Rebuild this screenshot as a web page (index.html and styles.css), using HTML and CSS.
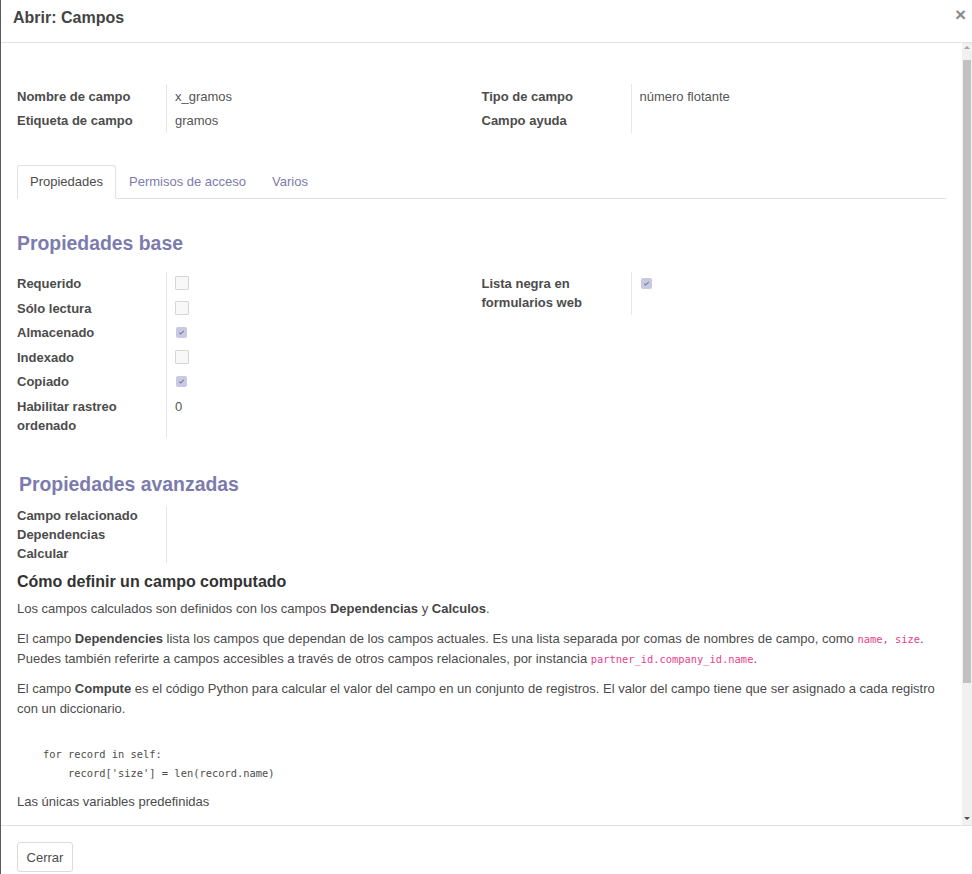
FILE: index.html
```html
<!DOCTYPE html>
<html lang="es">
<head>
<meta charset="utf-8">
<title>Abrir: Campos</title>
<link rel="stylesheet" href="styles.css">
</head>
<body>
<div class="modal">
  <header class="modal-header">
    <h4 class="modal-title">Abrir: Campos</h4>
    <span class="close">×</span>
  </header>
  <div class="modal-body">
    <div class="content">
      <div class="top-groups">
        <div class="group">
          <div class="lbl">Nombre de campo</div><div class="val">x_gramos</div>
          <div class="lbl">Etiqueta de campo</div><div class="val">gramos</div>
        </div>
        <div class="group">
          <div class="lbl">Tipo de campo</div><div class="val">número flotante</div>
          <div class="lbl">Campo ayuda</div><div class="val"></div>
        </div>
      </div>

      <nav class="tabs">
        <span class="tab active">Propiedades</span>
        <span class="tab">Permisos de acceso</span>
        <span class="tab">Varios</span>
      </nav>

      <h3 class="section-title">Propiedades base</h3>
      <div class="top-groups base">
        <div class="group">
          <div class="lbl">Requerido</div><div class="val"><span class="cb"></span></div>
          <div class="lbl">Sólo lectura</div><div class="val"><span class="cb"></span></div>
          <div class="lbl">Almacenado</div><div class="val"><span class="cb checked"><svg viewBox="0 0 11 11" width="11" height="11"><path d="M3.2 5.6 L4.7 7 L7.8 3.9" fill="none" stroke="#7c7bad" stroke-width="1.1"/></svg></span></div>
          <div class="lbl">Indexado</div><div class="val"><span class="cb"></span></div>
          <div class="lbl">Copiado</div><div class="val"><span class="cb checked"><svg viewBox="0 0 11 11" width="11" height="11"><path d="M3.2 5.6 L4.7 7 L7.8 3.9" fill="none" stroke="#7c7bad" stroke-width="1.1"/></svg></span></div>
          <div class="lbl">Habilitar rastreo ordenado</div><div class="val">0</div>
        </div>
        <div class="group">
          <div class="lbl">Lista negra en formularios web</div><div class="val"><span class="cb checked"><svg viewBox="0 0 11 11" width="11" height="11"><path d="M3.2 5.6 L4.7 7 L7.8 3.9" fill="none" stroke="#7c7bad" stroke-width="1.1"/></svg></span></div>
        </div>
      </div>

      <h3 class="section-title adv">Propiedades avanzadas</h3>
      <div class="group tight">
        <div class="lbl">Campo relacionado</div><div class="val"></div>
        <div class="lbl">Dependencias</div><div class="val"></div>
        <div class="lbl">Calcular</div><div class="val"></div>
      </div>

      <div class="help">
        <h4>Cómo definir un campo computado</h4>
        <p>Los campos calculados son definidos con los campos <b>Dependencias</b> y <b>Calculos</b>.</p>
        <p>El campo <b>Dependencies</b> lista los campos que dependan de los campos actuales. Es una lista separada por comas de nombres de campo, como <code>name, size</code>. Puedes también referirte a campos accesibles a través de otros campos relacionales, por instancia <code>partner_id.company_id.name</code>.</p>
        <p>El campo <b>Compute</b> es el código Python para calcular el valor del campo en un conjunto de registros. El valor del campo tiene que ser asignado a cada registro con un diccionario.</p>
<pre>for record in self:
    record['size'] = len(record.name)</pre>
        <p>Las únicas variables predefinidas</p>
      </div>
    </div>
    <div class="scrollbar">
      <div class="arrow up"></div>
      <div class="thumb"></div>
      <div class="track-rest"></div>
      <div class="arrow down"></div>
    </div>
  </div>
  <footer class="modal-footer">
    <button class="btn">Cerrar</button>
  </footer>
</div>
</body>
</html>
```

FILE: styles.css
```css
html, body {
  margin: 0;
  padding: 0;
  height: 874px;
  overflow: hidden;
  background: #fff;
}

body {
  font-family: "Liberation Sans", Arial, sans-serif;
  font-size: 13px;
  line-height: 1.5;
  color: #4c4c4c;
}

.modal {
  height: 874px;
  display: flex;
  flex-direction: column;
  border-left: 1px solid #5a5a5a;
  box-sizing: border-box;
}

.modal-header {
  box-sizing: border-box;
  border-bottom: 1px solid #e2e2e2;
  display: flex;
  justify-content: space-between;
  align-items: flex-start;
  padding: 8px 6px 0 12px;
  flex: none;
  height: 43px;
}

.modal-title {
  margin: 0;
  font-size: 16px;
  line-height: 20px;
  font-weight: bold;
  color: #444;
}

.close {
  font-size: 19px;
  line-height: 14px;
  font-weight: bold;
  color: #8a8a8a;
}

.modal-body {
  flex: 1;
  display: flex;
  min-height: 0;
  overflow: hidden;
}

.content {
  flex: 1;
  min-width: 0;
  padding: 41px 16px 0 16px;
  overflow: hidden;
}

.scrollbar {
  width: 10px;
  flex: none;
  background: #f1f1f1;
  display: flex;
  flex-direction: column;
}

.arrow {
  height: 17px;
  flex: none;
}

.arrow::after {
  content: "";
  display: block;
  width: 0;
  height: 0;
  margin: 0 auto;
  border-left: 3px solid transparent;
  border-right: 3px solid transparent;
}

.arrow.up::after {
  border-bottom: 3px solid #a3a3a3;
  margin-top: 3px;
}

.arrow.down::after {
  border-top: 3px solid #505050;
  margin-top: 9px;
}

.thumb {
  height: 623px;
  flex: none;
  background: #c1c1c1;
  margin: 0 1px;
}

.track-rest {
  flex: 1;
}

.top-groups {
  display: grid;
  grid-template-columns: 1fr 1fr;
}

.group {
  display: grid;
  grid-template-columns: 150px 1fr;
  align-content: start;
}

.lbl {
  font-weight: bold;
  color: #4c4c4c;
  border-right: 1px solid #e6e6e6;
  padding: 2.5px 0;
}

.base .lbl {
  line-height: 19px;
  padding: 2.75px 0;
}

.val {
  padding: 2.5px 0 2.5px 8px;
  color: #555;
  display: flex;
  align-items: flex-start;
}

.cb {
  display: block;
  width: 14px;
  height: 14px;
  box-sizing: border-box;
  border: 1px solid #d6d6d6;
  background: #f8f8f8;
  border-radius: 1px;
  margin-top: 2px;
}

.cb.checked {
  width: 11px;
  height: 11px;
  border: none;
  background: #cac9e3;
  border-radius: 2px;
  margin-top: 3.5px;
  margin-left: 1px;
}

.cb.checked svg {
  display: block;
}

.tabs {
  display: flex;
  border-bottom: 1px solid #dee2e6;
  margin-top: 32px;
}

.tab {
  padding: 6px 12px;
  color: #7c7bad;
  border: 1px solid transparent;
  border-top-left-radius: 3px;
  border-top-right-radius: 3px;
  margin-bottom: -1px;
  line-height: 19.5px;
}

.tab.active {
  color: #4c4c4c;
  border-color: #dee2e6 #dee2e6 #fff;
  background: #fff;
}

.section-title {
  margin: 32px 0 17px;
  font-size: 19.4px;
  line-height: 24px;
  font-weight: bold;
  color: #7c7bad;
}

.section-title.adv {
  margin: 34px 0 10px 2px;
}

.tight .lbl,
.tight .val {
  padding: 0;
  line-height: 19px;
}

.help {
  margin-top: 9px;
}

.help h4 {
  margin: 0 0 7px;
  font-size: 16px;
  line-height: 20px;
  font-weight: bold;
  color: #333;
}

.help p {
  margin: 0 0 11px;
  color: #4c4c4c;
}

.help b {
  color: #444;
}

.help code {
  font-family: "DejaVu Sans Mono", "Liberation Mono", monospace;
  font-size: 10.4px;
  color: #e83e8c;
}

.help pre {
  margin: 0 0 9px;
  padding: 16px 0 0 26px;
  font-family: "DejaVu Sans Mono", "Liberation Mono", monospace;
  font-size: 10.4px;
  line-height: 19px;
  color: #4c4c4c;
}

.modal-footer {
  flex: none;
  border-top: 1px solid #e2e2e2;
  padding: 16px 16px 2px;
  display: flex;
}

.btn {
  font-family: "Liberation Sans", Arial, sans-serif;
  font-size: 13px;
  color: #4c4c4c;
  background: #fff;
  border: 1px solid #dcdcdc;
  border-radius: 3px;
  height: 30px;
  width: 56px;
  padding: 0;
}
```
